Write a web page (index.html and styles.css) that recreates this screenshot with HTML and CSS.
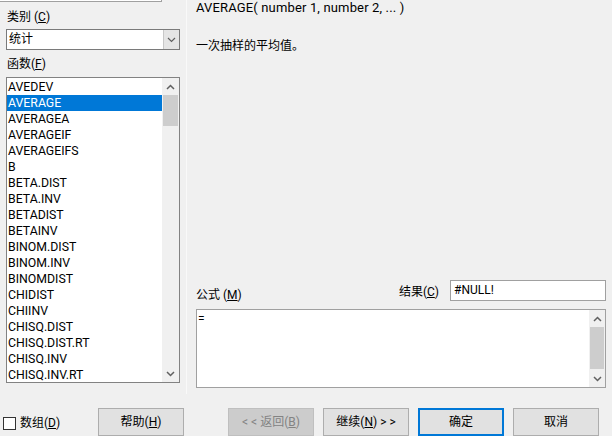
FILE: index.html
```html
<!DOCTYPE html>
<html>
<head>
<meta charset="utf-8">
<link rel="stylesheet" href="styles.css">
</head>
<body>
<div class="dialog">
  <div class="main">
    <div class="left">
      <div class="search"></div>
      <div class="label lbl-cat">类别 (<u>C</u>)</div>
      <div class="combo">
        <span class="combo-text">统计</span>
        <span class="combo-btn">
          <svg width="9" height="6" viewBox="0 0 9 6"><path d="M1 1 L4.5 4.5 L8 1" fill="none" stroke="#606060" stroke-width="1.2"/></svg>
        </span>
      </div>
      <div class="label lbl-fn">函数(<u>F</u>)</div>
      <div class="listbox">
        <ul class="items">
          <li>AVEDEV</li>
          <li class="sel">AVERAGE</li>
          <li>AVERAGEA</li>
          <li>AVERAGEIF</li>
          <li>AVERAGEIFS</li>
          <li>B</li>
          <li>BETA.DIST</li>
          <li>BETA.INV</li>
          <li>BETADIST</li>
          <li>BETAINV</li>
          <li>BINOM.DIST</li>
          <li>BINOM.INV</li>
          <li>BINOMDIST</li>
          <li>CHIDIST</li>
          <li>CHIINV</li>
          <li>CHISQ.DIST</li>
          <li>CHISQ.DIST.RT</li>
          <li>CHISQ.INV</li>
          <li>CHISQ.INV.RT</li>
        </ul>
        <div class="vscroll">
          <span class="arrow"><svg width="9" height="6" viewBox="0 0 9 6"><path d="M1 5 L4.5 1.5 L8 5" fill="none" stroke="#606060" stroke-width="1.5"/></svg></span>
          <div class="track"><div class="thumb list-thumb"></div></div>
          <span class="arrow"><svg width="9" height="6" viewBox="0 0 9 6"><path d="M1 1 L4.5 4.5 L8 1" fill="none" stroke="#606060" stroke-width="1.5"/></svg></span>
        </div>
      </div>
    </div>
    <div class="right">
      <div class="syntax">AVERAGE( number 1, number 2, ... )</div>
      <div class="desc">一次抽样的平均值。</div>
      <div class="spacer"></div>
      <div class="result-row">
        <span class="label formula-label">公式 (<u>M</u>)</span>
        <span class="label result-label">结果(<u>C</u>)</span>
        <div class="result-box">#NULL!</div>
      </div>
      <div class="formula">
        <div class="formula-text">=</div>
        <div class="vscroll">
          <span class="arrow"><svg width="9" height="6" viewBox="0 0 9 6"><path d="M1 5 L4.5 1.5 L8 5" fill="none" stroke="#606060" stroke-width="1.5"/></svg></span>
          <div class="track"><div class="thumb formula-thumb"></div></div>
          <span class="arrow"><svg width="9" height="6" viewBox="0 0 9 6"><path d="M1 1 L4.5 4.5 L8 1" fill="none" stroke="#606060" stroke-width="1.5"/></svg></span>
        </div>
      </div>
    </div>
  </div>
  <div class="footer">
    <label class="check"><span class="box"></span>数组(<u>D</u>)</label>
    <button class="btn help">帮助(<u>H</u>)</button>
    <button class="btn back" disabled>&lt; &lt; 返回(<u>B</u>)</button>
    <button class="btn next">继续(<u>N</u>) &gt; &gt;</button>
    <button class="btn ok">确定</button>
    <button class="btn cancel">取消</button>
  </div>
</div>
</body>
</html>
```
FILE: styles.css
```css
* { box-sizing: border-box; }
html, body { margin: 0; padding: 0; }
body {
  background: #f0f0f0;
  font-family: Roboto, "Noto Sans CJK SC", sans-serif;
  font-size: 12px;
  line-height: 16px;
  color: #000;
}
u { text-decoration: underline; text-underline-offset: 1px; }
.dialog {
  width: 612px;
  height: 436px;
  overflow: hidden;
  display: flex;
  flex-direction: column;
}
.main {
  display: flex;
  height: 395px;
}
.left {
  width: 186px;
  padding-left: 6px;
  display: flex;
  flex-direction: column;
}
.search {
  width: 168px;
  height: 20px;
  margin-top: -18px;
  margin-left: -12px;
  background: #fff;
  border: 1px solid #a0a0a0;
}
.label { white-space: nowrap; }
.lbl-cat { margin-top: 7px; margin-left: 1px; }
.combo {
  margin-top: 4px;
  width: 174px;
  height: 21px;
  border: 1px solid #7a7a7a;
  background: #fff;
  display: flex;
  align-items: stretch;
}
.combo-text { flex: 1; padding-left: 2px; line-height: 18px; }
.combo-btn {
  width: 16px;
  background: #e5e5e5;
  border-left: 1px solid #c8c8c8;
  display: flex;
  align-items: center;
  justify-content: center;
}
.lbl-fn { margin-top: 6px; margin-left: 1px; }
.listbox {
  margin-top: 5px;
  width: 174px;
  height: 306px;
  border: 1px solid #828282;
  background: #fff;
  display: flex;
}
.items {
  list-style: none;
  margin: 0;
  padding: 1px 0 0;
  flex: 1;
  overflow: hidden;
  font-size: 12.3px;
}
.items li {
  height: 16px;
  line-height: 16px;
  padding-left: 1px;
  white-space: nowrap;
}
.items li.sel { background: #0078d7; color: #fff; }
.vscroll {
  width: 17px;
  background: #f0f0f0;
  display: flex;
  flex-direction: column;
}
.arrow {
  height: 17px;
  display: flex;
  align-items: center;
  justify-content: center;
}
.track { flex: 1; padding: 0 1px; }
.thumb { background: #cdcdcd; }
.list-thumb { height: 31px; }
.formula-thumb { height: 42px; }
.right {
  flex: 1;
  padding-left: 9px;
  padding-right: 6px;
  border-left: 1px solid #f9f9f9;
  display: flex;
  flex-direction: column;
}
.syntax { margin-top: 0; white-space: nowrap; font-size: 13px; letter-spacing: 0.15px; }
.desc { margin-top: 22px; }
.spacer { flex: 1; }
.result-row {
  display: flex;
  align-items: flex-end;
  height: 21px;
  margin-bottom: 8px;
}
.formula-label { flex: 1; margin-bottom: -2px; }
.result-label { margin-right: 11px; margin-bottom: 1px; }
.result-box {
  width: 156px;
  height: 21px;
  border: 1px solid #a0a0a0;
  background: #fff;
  padding-left: 3px;
  line-height: 19px;
}
.formula {
  height: 79px;
  border: 1px solid #a0a0a0;
  background: #fff;
  display: flex;
  margin-bottom: 6px;
}
.formula-text { flex: 1; padding-left: 1px; padding-top: 1px; }
.formula .vscroll { width: 16px; }
.footer {
  flex: 1;
  display: flex;
  align-items: flex-start;
  padding-top: 14px;
}
.check {
  display: flex;
  align-items: center;
  margin-top: 7px;
  margin-left: 3px;
  width: 95px;
}
.box {
  width: 13px;
  height: 13px;
  border: 1px solid #333;
  background: #fff;
  margin-right: 4px;
}
.btn {
  font: inherit;
  height: 28px;
  width: 86px;
  padding: 0 0 1px;
  background: #e1e1e1;
  border: 1px solid #adadad;
  color: #000;
}
.help { margin-right: 44px; }
.back { margin-right: 9px; background: #cccccc; border-color: #bfbfbf; color: #838383; }
.next { margin-right: 9px; }
.ok { margin-right: 9px; border: 2px solid #0078d7; }
```
